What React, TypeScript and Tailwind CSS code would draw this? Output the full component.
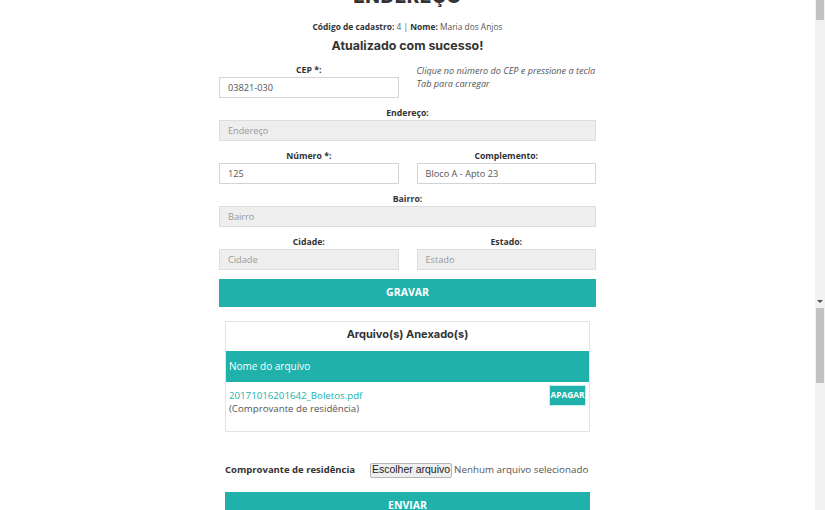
import React from "react";

const Label = ({ children }: { children: React.ReactNode }) => (
  <div className="h-[13px] text-center text-[8.7px] leading-[13px] font-bold text-[#333]">{children}</div>
);

const Input = ({ value, placeholder, disabled }: { value?: string; placeholder?: string; disabled?: boolean }) => (
  <div
    className={
      "h-[21px] border px-[8px] flex items-center text-[9.2px] " +
      (disabled ? "bg-[#eeeeee] border-[#dddddd] text-[#999]" : "bg-white border-[#d4d4d4] text-[#555]")
    }
  >
    {value ?? placeholder}
  </div>
);

export default function App() {
  return (
    <div className="w-[825px] h-[510px] overflow-hidden flex bg-white" style={{ fontFamily: '"Open Sans", sans-serif' }}>
      <div className="flex-1 flex flex-col items-center">
        <div
          className="mt-[-14px] h-[22px] text-[19px] leading-[22px] font-extrabold tracking-[0.5px] text-[#333]"
          style={{ fontFamily: 'Inter, sans-serif' }}
        >
          ENDEREÇO
        </div>
        <div className="mt-[12px] text-[8.4px] leading-[14px] text-[#555]">
          <b className="text-[#333]">Código de cadastro:</b> 4 | <b className="text-[#333]">Nome:</b> Maria dos Anjos
        </div>
        <div
          className="mt-[4px] text-[12.4px] leading-[16px] font-bold text-[#333]"
          style={{ fontFamily: 'Inter, sans-serif' }}
        >
          Atualizado com sucesso!
        </div>
        <div className="w-[377px] mt-[10px] flex flex-col">
          <div className="grid grid-cols-2 gap-x-[18px]">
            <div>
              <Label>CEP *:</Label>
              <Input value="03821-030" />
            </div>
            <div className="text-[9.1px] leading-[13px] italic text-[#555]">
              Clique no número do CEP e pressione a tecla
              <br />
              Tab para carregar
            </div>
          </div>
          <div className="mt-[9px]">
            <Label>Endereço:</Label>
            <Input placeholder="Endereço" disabled />
          </div>
          <div className="mt-[9px] grid grid-cols-2 gap-x-[18px]">
            <div>
              <Label>Número *:</Label>
              <Input value="125" />
            </div>
            <div>
              <Label>Complemento:</Label>
              <Input value="Bloco A - Apto 23" />
            </div>
          </div>
          <div className="mt-[9px]">
            <Label>Bairro:</Label>
            <Input placeholder="Bairro" disabled />
          </div>
          <div className="mt-[9px] grid grid-cols-2 gap-x-[18px]">
            <div>
              <Label>Cidade:</Label>
              <Input placeholder="Cidade" disabled />
            </div>
            <div>
              <Label>Estado:</Label>
              <Input placeholder="Estado" disabled />
            </div>
          </div>
          <div className="mt-[9px] h-[28px] bg-[#20b2aa] flex items-center justify-center text-white font-bold text-[10.5px]">
            GRAVAR
          </div>

          <div className="mx-[6px] mt-[14px] h-[111px] border border-[#e3e3e3] flex flex-col">
            <div
              className="h-[29px] pb-[4px] flex items-center justify-center text-[11px] font-bold text-[#333]"
              style={{ fontFamily: 'Inter, sans-serif' }}
            >
              Arquivo(s) Anexado(s)
            </div>
            <div className="h-[31px] bg-[#20b2aa] flex items-center px-[3px] text-white text-[10px]">
              Nome do arquivo
            </div>
            <div className="flex justify-between pl-[3px] pr-[3px] pt-[3px]">
              <div className="text-[9.7px] leading-[13px] pt-[4px]">
                <div className="text-[#20b2aa]">20171016201642_Boletos.pdf</div>
                <div className="text-[#555]">(Comprovante de residência)</div>
              </div>
              <div className="h-[21px] w-[37px] bg-[#20b2aa] border border-[#c8eeeb] flex items-center justify-center text-white font-bold text-[8.3px]">
                APAGAR
              </div>
            </div>
          </div>

          <div className="mx-[6px] mt-[30px] flex items-center h-[16px] whitespace-nowrap">
            <div className="w-[145px] shrink-0 text-[9.5px] font-bold text-[#333]">Comprovante de residência</div>
            <div
              className="shrink-0 h-[15px] w-[82px] flex items-center justify-center bg-[#efefef] border border-[#b5b5b5] rounded-[2px] text-[10.5px] text-[#222]"
              style={{ fontFamily: '"Liberation Sans", Arial, sans-serif' }}
            >
              Escolher arquivo
            </div>
            <div className="ml-[2px] text-[9.8px] text-[#555]">Nenhum arquivo selecionado</div>
          </div>

          <div className="mx-[6px] mt-[14px] h-[28px] bg-[#20b2aa] flex items-center justify-center text-white font-bold text-[10.5px]">
            ENVIAR
          </div>
        </div>
      </div>
      <div className="w-[10px] h-full bg-[#f1f1f1] flex flex-col items-center">
        <div className="w-[8px] h-[20px] bg-[#c1c1c1]" />
        <div className="flex-1" />
        <div className="w-0 h-0 border-l-[3px] border-r-[3px] border-t-[3px] border-l-transparent border-r-transparent border-t-[#505050]" />
        <div className="h-[5px]" />
        <div className="w-[8px] h-[75px] bg-[#c1c1c1]" />
        <div className="h-[127px]" />
      </div>
    </div>
  );
}
